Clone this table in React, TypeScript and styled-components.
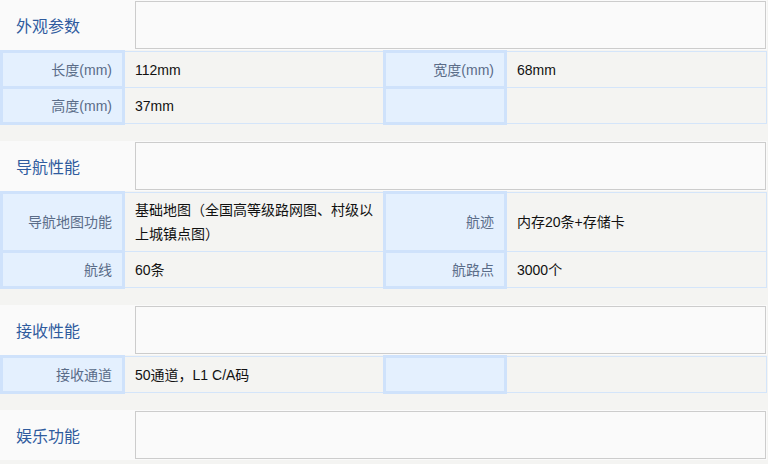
import React from "react";
import styled, { createGlobalStyle } from "styled-components";

const GlobalStyle = createGlobalStyle`
  html, body {
    margin: 0;
    padding: 0;
    background: #f4f4f2;
  }
  body {
    font-family: "Liberation Sans", "Noto Sans CJK SC", sans-serif;
    font-size: 14px;
  }
`;

const Page = styled.div`
  width: 767px;
  display: flex;
  flex-direction: column;
  gap: 16px;
`;

const Section = styled.section`
  display: flex;
  flex-direction: column;
`;

const Header = styled.div`
  height: 50px;
  display: flex;
  background: #fafafa;
`;

const Title = styled.div`
  width: 135px;
  flex: none;
  box-sizing: border-box;
  padding-left: 16px;
  padding-bottom: 1px;
  display: flex;
  align-items: center;
  font-size: 16px;
  color: #2f5b9e;
`;

const TitleBox = styled.div`
  flex: 1;
  margin: 1px 1px 1px 0;
  border: 1px solid #cccccc;
  background: #fafafa;
`;

const Table = styled.table`
  width: 767px;
  border-collapse: collapse;
  table-layout: fixed;
`;

const Row = styled.tr<{ $tall?: boolean }>`
  height: ${(p) => (p.$tall ? 59 : 36)}px;
`;

const LabelCell = styled.td`
  padding: 0 10px 0 0;
  border: 3px solid #cfe2fb;
  background: #e4f0fe;
  color: #5a6c88;
  text-align: right;
  line-height: 24px;
  vertical-align: middle;
`;

const ValueCell = styled.td`
  padding: 0 8px 0 10px;
  border: 1px solid #d4e5fa;
  background: #f4f4f2;
  color: #111;
  line-height: 24px;
  vertical-align: middle;
`;

type Spec = [string, string];
type SpecRow = { cells: [Spec, Spec]; tall?: boolean };
type Group = { title: string; rows: SpecRow[] };

const groups: Group[] = [
  {
    title: "外观参数",
    rows: [
      { cells: [["长度(mm)", "112mm"], ["宽度(mm)", "68mm"]] },
      { cells: [["高度(mm)", "37mm"], ["", ""]] },
    ],
  },
  {
    title: "导航性能",
    rows: [
      {
        tall: true,
        cells: [
          ["导航地图功能", "基础地图（全国高等级路网图、村级以上城镇点图）"],
          ["航迹", "内存20条+存储卡"],
        ],
      },
      { cells: [["航线", "60条"], ["航路点", "3000个"]] },
    ],
  },
  {
    title: "接收性能",
    rows: [{ cells: [["接收通道", "50通道，L1 C/A码"], ["", ""]] }],
  },
  { title: "娱乐功能", rows: [] },
];

export default function App() {
  return (
    <>
      <GlobalStyle />
      <Page>
        {groups.map((g) => (
          <Section key={g.title}>
            <Header>
              <Title>{g.title}</Title>
              <TitleBox />
            </Header>
            {g.rows.length > 0 && (
              <Table>
                <colgroup>
                  <col style={{ width: 122 }} />
                  <col style={{ width: 261 }} />
                  <col style={{ width: 121 }} />
                  <col />
                </colgroup>
                <tbody>
                  {g.rows.map((r, i) => (
                    <Row key={i} $tall={r.tall}>
                      {r.cells.map(([label, value], j) => (
                        <React.Fragment key={j}>
                          <LabelCell>{label}</LabelCell>
                          <ValueCell>{value}</ValueCell>
                        </React.Fragment>
                      ))}
                    </Row>
                  ))}
                </tbody>
              </Table>
            )}
          </Section>
        ))}
      </Page>
    </>
  );
}
